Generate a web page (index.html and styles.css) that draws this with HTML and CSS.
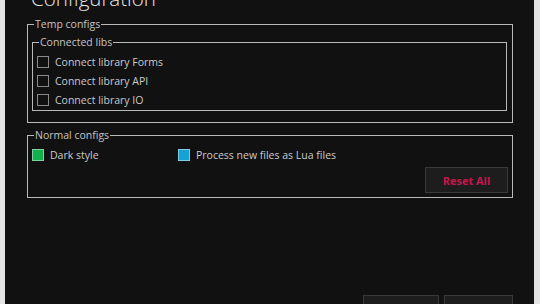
FILE: index.html
```html
<!DOCTYPE html>
<html lang="en">
<head>
    <meta charset="UTF-8">
    <title>Configuration</title>
    <link rel="stylesheet" href="styles.css">
</head>
<body>
    <div class="window">
        <h1 class="title">Configuration</h1>

        <fieldset class="group temp">
            <legend>Temp configs</legend>
            <fieldset class="group libs">
                <legend>Connected libs</legend>
                <label class="check"><span class="box"></span>Connect library Forms</label>
                <label class="check"><span class="box"></span>Connect library API</label>
                <label class="check"><span class="box"></span>Connect library IO</label>
            </fieldset>
        </fieldset>

        <fieldset class="group normal">
            <legend>Normal configs</legend>
            <div class="row">
                <label class="check wide"><span class="box green"></span>Dark style</label>
                <label class="check"><span class="box blue"></span>Process new files as Lua files</label>
            </div>
            <div class="actions">
                <button class="btn reset">Reset All</button>
            </div>
        </fieldset>

        <div class="footer">
            <button class="btn ok"></button>
            <button class="btn cancel"></button>
        </div>
    </div>
</body>
</html>
```

FILE: styles.css
```css
html, body {
    margin: 0;
    padding: 0;
    height: 100%;
    overflow: hidden;
}

body {
    background: #e4e4e4;
    font-family: "Open Sans", "Liberation Sans", sans-serif;
    font-size: 10.5px;
    color: #c9c9c9;
}

.window {
    box-sizing: border-box;
    display: flex;
    flex-direction: column;
    margin: 0 6px 0 5px;
    height: 304px;
    padding: 0 21px 0 22px;
    background: #111111;
    overflow: hidden;
}

.title {
    margin: -12px 0 0 4px;
    height: 20px;
    font-size: 20.5px;
    font-weight: 300;
    line-height: 20px;
    color: #e6e6e6;
}

.group {
    margin: 0;
    border: 1px solid #b9b9b9;
    padding: 0 4px;
}

.group legend {
    margin-left: 2px;
    padding: 0 1px;
    line-height: 12px;
    font-size: 10.5px;
    color: #c4c4c4;
}

.temp {
    margin-top: 10px;
    height: 105px;
    box-sizing: border-box;
}

.libs {
    margin: 6px 1px 0 0;
    padding: 4px 4px 0 4px;
    height: 75px;
    box-sizing: border-box;
}

.check {
    display: flex;
    align-items: center;
    gap: 6px;
    height: 19px;
    font-size: 10.5px;
    color: #cacaca;
}

.box {
    box-sizing: border-box;
    width: 12px;
    height: 12px;
    border: 1px solid #8a8a8a;
}

.box.green {
    background: #12b14e;
    border-color: #7fd09c;
}

.box.blue {
    background: #16a2d4;
    border-color: #86c9e3;
}

.normal {
    margin-top: 6px;
    height: 69px;
    box-sizing: border-box;
    padding: 4px 4px 0 4px;
}

.row {
    display: flex;
}

.wide {
    width: 146px;
}

.actions {
    display: flex;
    justify-content: flex-end;
    margin-top: 3px;
}

.btn {
    box-sizing: border-box;
    border: 1px solid #3a3a3a;
    background: #1d1d1d;
    font-family: "Open Sans", "Liberation Sans", sans-serif;
}

.reset {
    width: 83px;
    height: 26px;
    font-size: 11px;
    font-weight: bold;
    color: #c8174b;
}

.footer {
    display: flex;
    justify-content: flex-end;
    gap: 5px;
    margin-top: auto;
    height: 9px;
}

.footer .btn {
    height: 20px;
}

.ok {
    width: 76px;
}

.cancel {
    width: 69px;
}
```
